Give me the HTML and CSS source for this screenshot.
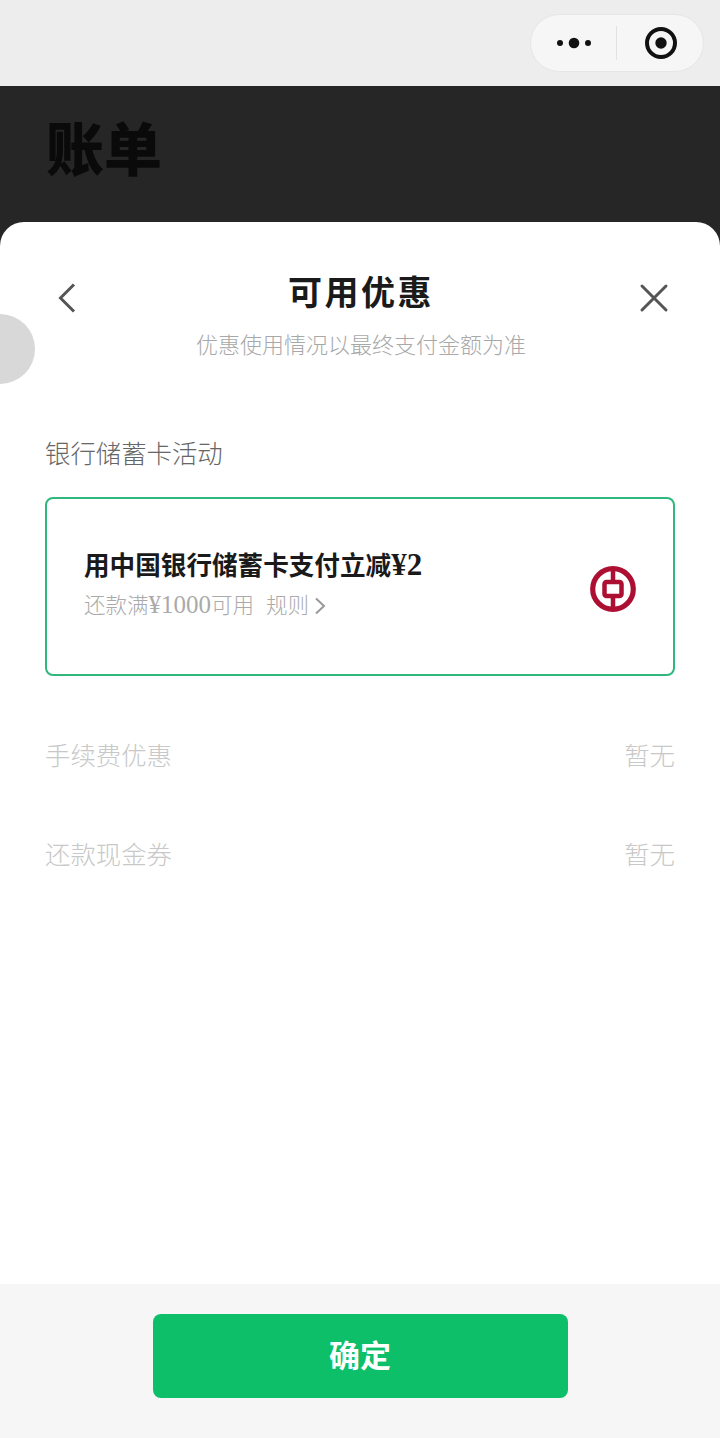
FILE: index.html
```html
<!DOCTYPE html>
<html lang="zh-CN">
<head>
    <meta charset="UTF-8">
    <meta name="viewport" content="width=device-width, initial-scale=1.0">
    <title>账单</title>
    <link rel="stylesheet" href="styles.css">
</head>
<body>
    <div class="topbar">
        <div class="capsule">
            <div class="capsule-more">
                <svg width="36" height="12" viewBox="0 0 36 12">
                    <circle cx="4" cy="6" r="3" fill="#111"/>
                    <circle cx="18" cy="6" r="5.3" fill="#111"/>
                    <circle cx="32" cy="6" r="3" fill="#111"/>
                </svg>
            </div>
            <div class="capsule-line"></div>
            <div class="capsule-close">
                <svg width="34" height="34" viewBox="0 0 34 34">
                    <circle cx="17" cy="17" r="14" fill="none" stroke="#111" stroke-width="4"/>
                    <circle cx="17" cy="17" r="5.7" fill="#111"/>
                </svg>
            </div>
        </div>
    </div>

    <div class="page-head">
        <h1 class="page-title">账单</h1>
    </div>

    <div class="sheet">
        <div class="sheet-head">
            <button class="icon-btn">
                <svg width="20" height="32" viewBox="0 0 20 32">
                    <path d="M17 2.5 L3.5 16 L17 29.5" fill="none" stroke="#555" stroke-width="3"/>
                </svg>
            </button>
            <div class="sheet-titles">
                <h2 class="sheet-title">可用优惠</h2>
                <p class="sheet-sub">优惠使用情况以最终支付金额为准</p>
            </div>
            <button class="icon-btn">
                <svg width="30" height="30" viewBox="0 0 30 30">
                    <path d="M3 3 L27 27 M27 3 L3 27" fill="none" stroke="#555" stroke-width="3" stroke-linecap="round"/>
                </svg>
            </button>
        </div>

        <div class="sheet-body">
            <div class="section-label">银行储蓄卡活动</div>
            <div class="card">
                <div class="card-text">
                    <div class="card-title">用中国银行储蓄卡支付立减<span class="card-amount">¥2</span></div>
                    <div class="card-sub">
                        <span>还款满<span class="sub-amount">¥1000</span>可用</span>
                        <span class="rule">规则</span>
                        <svg width="12" height="18" viewBox="0 0 12 18">
                            <path d="M2 1.5 L10 9 L2 16.5" fill="none" stroke="#999" stroke-width="2"/>
                        </svg>
                    </div>
                </div>
                <svg class="bank-logo" width="46" height="46" viewBox="0 0 46 46">
                    <circle cx="23" cy="23" r="20.3" fill="none" stroke="#ad0f33" stroke-width="5.2"/>
                    <rect x="14.5" y="16" width="17" height="14" rx="2" fill="none" stroke="#ad0f33" stroke-width="4.5"/>
                    <path d="M23 3 V16 M23 30 V43" stroke="#ad0f33" stroke-width="4.5"/>
                </svg>
            </div>
            <div class="row">
                <span>手续费优惠</span>
                <span>暂无</span>
            </div>
            <div class="row">
                <span>还款现金券</span>
                <span>暂无</span>
            </div>
        </div>

        <div class="sheet-foot">
            <button class="ok-btn">确定</button>
        </div>
    </div>

    <div class="float-dot"></div>
</body>
</html>
```

FILE: styles.css
```css
body {
    margin: 0;
    width: 720px;
    height: 1438px;
    overflow: hidden;
    background: #262626;
    font-family: "Liberation Serif", "Noto Sans CJK SC", serif;
}
h1, h2, p {
    margin: 0;
}
button {
    border: none;
    background: none;
    padding: 0;
    font-family: inherit;
}

.topbar {
    height: 86px;
    background: #ededed;
    display: flex;
    justify-content: flex-end;
    align-items: flex-start;
    padding: 14px 16px 0 0;
    box-sizing: border-box;
}
.capsule {
    width: 174px;
    height: 58px;
    box-sizing: border-box;
    border: 1px solid #e6e6e6;
    border-radius: 29px;
    background: #f6f6f6;
    display: flex;
    align-items: center;
}
.capsule-more {
    width: 85px;
    display: flex;
    justify-content: flex-end;
    padding-right: 24px;
    box-sizing: border-box;
}
.capsule-more svg {
    display: block;
}
.capsule-line {
    width: 1px;
    height: 34px;
    background: #e2e2e2;
}
.capsule-close {
    margin-left: 27px;
    display: flex;
}

.page-head {
    height: 136px;
    box-sizing: border-box;
    padding: 26px 46px 0;
}
.page-title {
    font-size: 58px;
    line-height: 80px;
    font-weight: 900;
    color: #0a0a0a;
}

.sheet {
    height: 1216px;
    background: #fff;
    border-radius: 24px 24px 0 0;
    display: flex;
    flex-direction: column;
}
.sheet-head {
    display: flex;
    justify-content: space-between;
    padding: 48px 51px 0 57px;
}
.icon-btn {
    height: 56px;
    display: flex;
    align-items: center;
}
.icon-btn svg {
    display: block;
}
.sheet-titles {
    margin-left: 6px;
    text-align: center;
}
.sheet-title {
    padding-top: 1px;
    font-size: 34px;
    line-height: 46px;
    font-weight: 700;
    letter-spacing: 2.5px;
    color: #1a1a1a;
}
.sheet-sub {
    margin-top: 13px;
    font-size: 22px;
    line-height: 32px;
    color: #a8a8a8;
    font-weight: 300;
}

.sheet-body {
    flex: 1;
    padding: 0 45px;
}
.section-label {
    margin-top: 74px;
    font-size: 25.4px;
    line-height: 36px;
    color: #666;
    font-weight: 300;
}
.card {
    margin-top: 25px;
    height: 179px;
    box-sizing: border-box;
    border: 2px solid #2fb77c;
    border-radius: 8px;
    padding: 0 37px;
    display: flex;
    justify-content: space-between;
    align-items: center;
}
.card-text {
    padding-bottom: 3px;
}
.card-title {
    font-size: 25.6px;
    line-height: 36px;
    font-weight: 700;
    color: #1a1a1a;
}
.card-amount {
    font-size: 31px;
    line-height: 30px;
}
.card-sub {
    margin-top: 6px;
    font-size: 21.5px;
    line-height: 30px;
    color: #aaa;
    font-weight: 300;
    display: flex;
    align-items: center;
}
.sub-amount {
    font-size: 25px;
    line-height: 26px;
}
.rule {
    margin-left: 12px;
    margin-right: 5px;
}
.bank-logo {
    flex: none;
    margin-top: 4px;
}
.row {
    display: flex;
    justify-content: space-between;
    font-size: 25.4px;
    line-height: 36px;
    color: #c8c8c8;
    font-weight: 300;
    margin-top: 63px;
}
.card + .row {
    margin-top: 62px;
}

.sheet-foot {
    height: 154px;
    background: #f6f6f6;
    display: flex;
    justify-content: center;
    padding-top: 30px;
    box-sizing: border-box;
}
.ok-btn {
    width: 415px;
    height: 84px;
    padding-bottom: 5px;
    border-radius: 8px;
    background: #0dbf69;
    color: #fff;
    font-size: 31px;
    font-weight: 700;
}

.float-dot {
    position: absolute;
    left: -35px;
    top: 314px;
    width: 70px;
    height: 70px;
    border-radius: 50%;
    background: #d8d8d8;
}
```
